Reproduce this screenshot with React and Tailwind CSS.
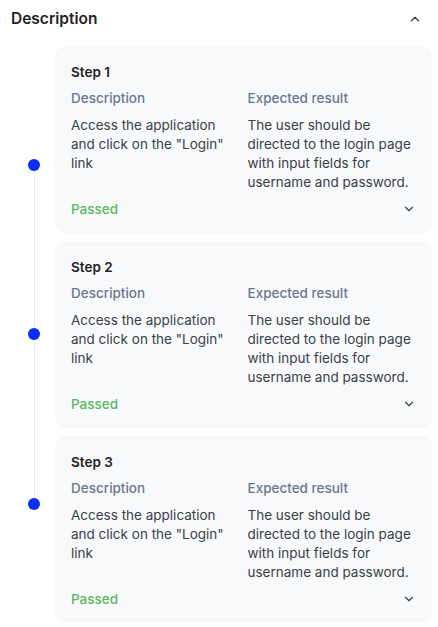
import { ChevronUp, ChevronDown } from "lucide-react";

const steps = [
    {
        name: "Step 1",
        description: 'Access the application and click on the "Login" link',
        expected: "The user should be directed to the login page with input fields for username and password.",
        status: "Passed",
    },
    {
        name: "Step 2",
        description: 'Access the application and click on the "Login" link',
        expected: "The user should be directed to the login page with input fields for username and password.",
        status: "Passed",
    },
    {
        name: "Step 3",
        description: 'Access the application and click on the "Login" link',
        expected: "The user should be directed to the login page with input fields for username and password.",
        status: "Passed",
    },
];

function StepCard({ step }) {
    return (
        <div className="bg-[#f8f9fb] rounded-[10px] pt-4 pb-[14px] px-4">
            <h3 className="text-[13.5px] leading-5 font-semibold text-[#1f2328]">{step.name}</h3>
            <div className="grid grid-cols-2 gap-x-2 mt-[6px]">
                <div>
                    <p className="text-[13.5px] leading-5 font-medium text-[#6b7791]">Description</p>
                    <p className="text-[13.5px] leading-[19px] text-[#3b3f47] mt-[8px]">{step.description}</p>
                </div>
                <div>
                    <p className="text-[13.5px] leading-5 font-medium text-[#6b7791]">Expected result</p>
                    <p className="text-[13.5px] leading-[19px] text-[#3b3f47] mt-[8px]">{step.expected}</p>
                </div>
            </div>
            <div className="flex items-center justify-between mt-[7px]">
                <span className="text-[13.5px] leading-5 font-medium text-[#5cb860]">{step.status}</span>
                <ChevronDown className="w-[14px] h-[14px] text-[#374151]" strokeWidth={2} />
            </div>
        </div>
    );
}

export default function App() {
    return (
        <div className="min-h-screen bg-white font-['Inter',sans-serif] pl-[11px] pr-[6px] pt-[7px]">
            {/* Header */}
            <div className="flex items-center justify-between pr-[10px]">
                <h2 className="text-[15.5px] leading-6 font-semibold text-[#1f2328]">Description</h2>
                <ChevronUp className="w-[14px] h-[14px] text-[#374151]" strokeWidth={2.25} />
            </div>

            <div className="flex mt-[15px] -ml-[11px]">
                {/* Timeline */}
                <div className="w-[55px] shrink-0">
                    <div className="w-3 ml-[28px] mt-[113px] flex flex-col items-center">
                        <span className="w-3 h-3 rounded-full bg-[#0a2ff2]" />
                        <span className="w-px h-[157px] bg-[#e8eaee]" />
                        <span className="w-3 h-3 rounded-full bg-[#0a2ff2]" />
                        <span className="w-px h-[158px] bg-[#e8eaee]" />
                        <span className="w-3 h-3 rounded-full bg-[#0a2ff2]" />
                    </div>
                </div>

                {/* Steps */}
                <div className="flex-1 flex flex-col gap-2">
                    {steps.map((step) => (
                        <StepCard key={step.name} step={step} />
                    ))}
                </div>
            </div>
        </div>
    );
}
